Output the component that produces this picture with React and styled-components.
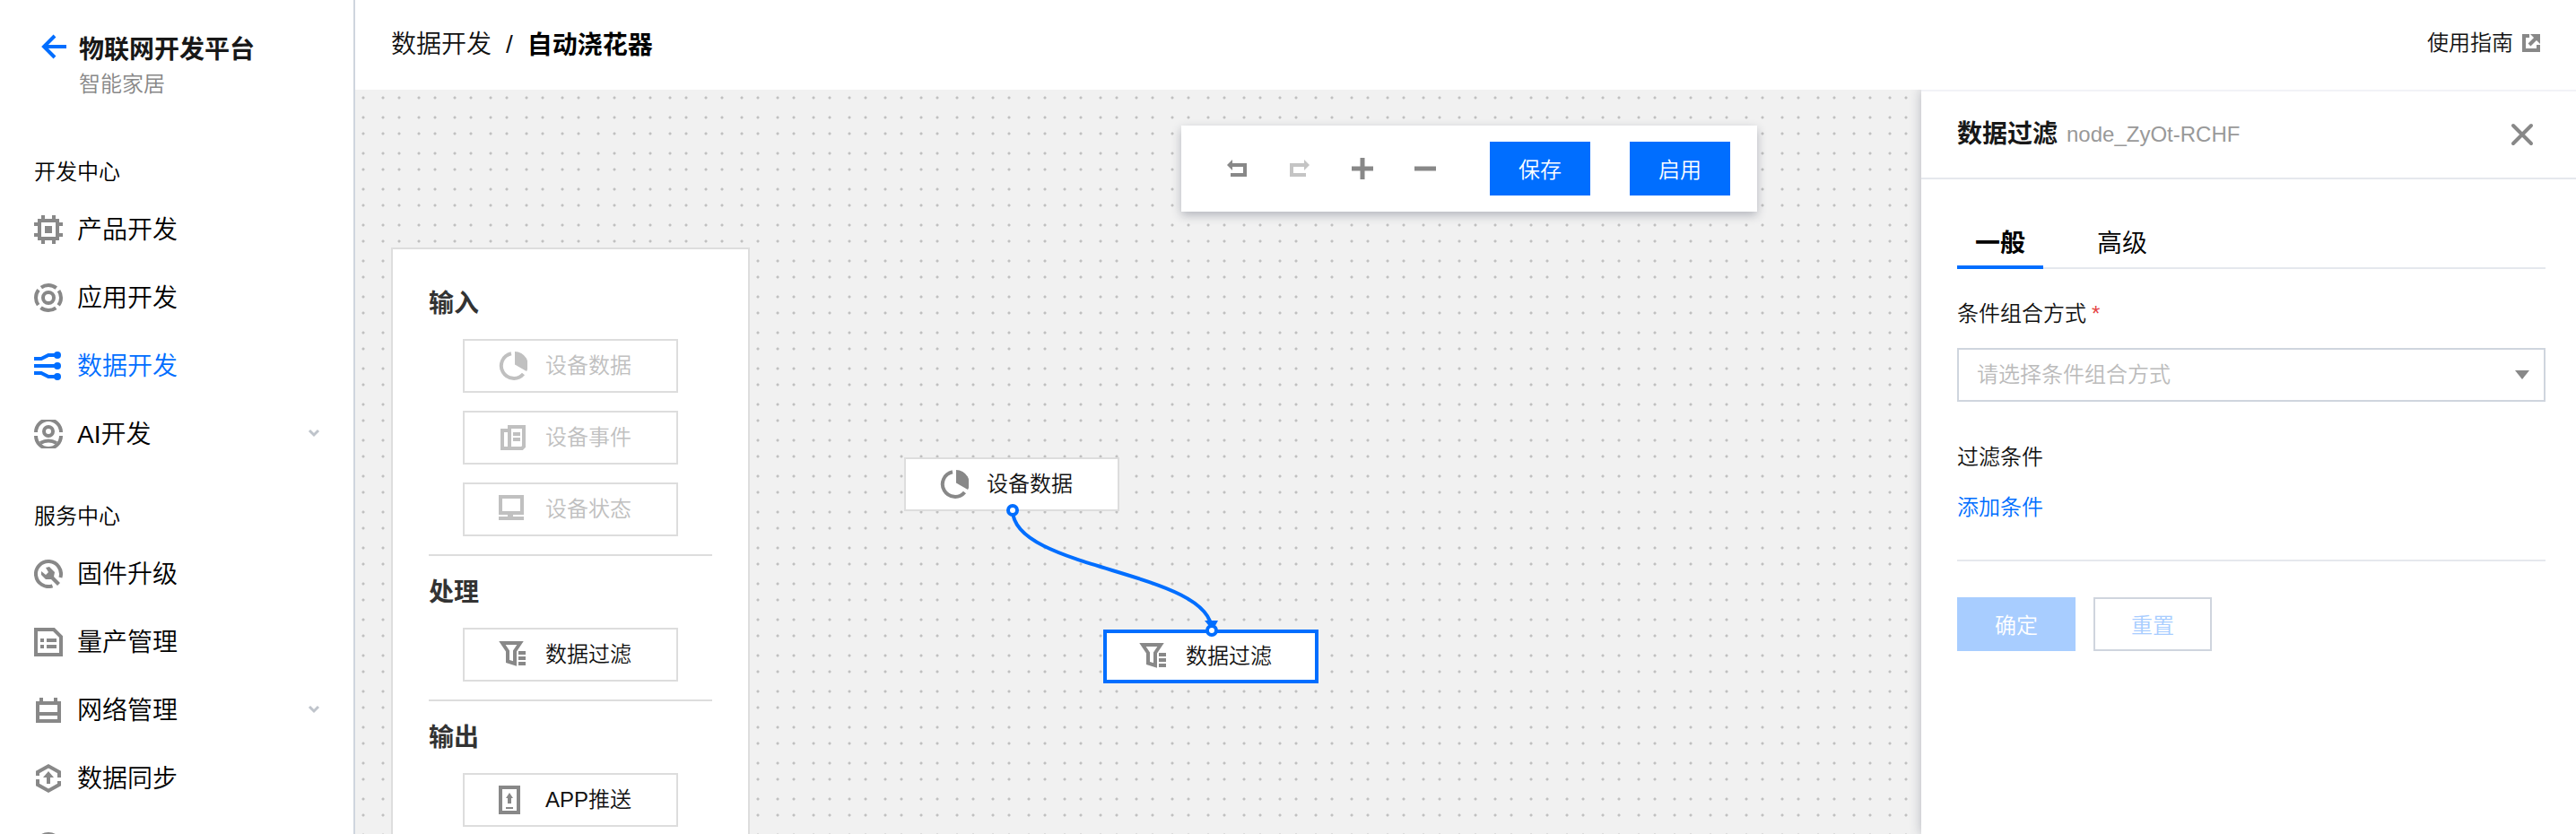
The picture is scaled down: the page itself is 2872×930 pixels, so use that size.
import React, { useState } from 'react';
import styled, { createGlobalStyle, css } from 'styled-components';

const blue = '#006eff';
const line = '#cfd5de';
const softLine = '#e5e8ed';
const gray = '#888';

const GlobalStyle = createGlobalStyle`
  * { box-sizing: border-box; }
  body {
    margin: 0;
    background: #fff;
    color: #000;
    font: 350 24px/32px 'Liberation Sans', 'Noto Sans CJK SC', sans-serif;
  }
  button, select, input { font: inherit; color: inherit; border-radius: 0; }
  a { color: inherit; text-decoration: none; }
  h1, h2, h3, p { margin: 0; }
  svg { display: block; flex: none; }
`;

const Page = styled.div`
  display: flex;
  height: 100vh;
  overflow: hidden;
`;

const Sidebar = styled.nav`
  flex: none;
  width: 396px;
  border-right: 2px solid ${line};
  background: #fff;
  overflow: hidden;
`;

const Brand = styled.div`
  display: flex;
  gap: 8px;
  height: 138px;
  padding: 36px 40px 0;
`;

const BackLink = styled.a`
  width: 40px;
  height: 32px;
`;

const BrandName = styled.h1`
  font-size: 28px;
  line-height: 40px;
  font-weight: 700;
  color: #181818;
`;

const BrandSub = styled.p`
  padding-top: 2px;
  line-height: 32px;
  color: ${gray};
`;

const GroupTitle = styled.h2`
  padding: 38px 38px 10px;
  font-size: 24px;
  line-height: 32px;
  font-weight: 350;
`;

const NavItem = styled.a`
  display: flex;
  align-items: center;
  gap: 16px;
  height: 76px;
  padding: 0 36px 0 38px;
  font-size: 28px;
  color: ${(p) => (p.$active ? blue : '#000')};
  > svg:first-child { color: ${(p) => (p.$active ? blue : gray)}; }
`;

const NavLabel = styled.span`
  flex: 1;
  padding-top: 2px;
`;

const Main = styled.div`
  flex: 1;
  min-width: 0;
  display: flex;
  flex-direction: column;
`;

const TopBar = styled.header`
  flex: none;
  display: flex;
  align-items: center;
  justify-content: space-between;
  height: 100px;
  padding: 0 40px;
`;

const Crumbs = styled.div`
  display: flex;
  align-items: center;
  gap: 16px;
  font-size: 28px;
  line-height: 36px;
  color: #111;
`;

const CrumbHere = styled.strong`
  padding-top: 2px;
  font-weight: 700;
  color: #000;
`;

const GuideLink = styled.a`
  display: flex;
  align-items: center;
  gap: 10px;
  padding-bottom: 4px;
  color: #111;
  > svg { color: ${gray}; }
`;

const dot = (x, y) =>
  `radial-gradient(circle at ${x}px ${y}px, #c0c0c0 1px, rgba(192, 192, 192, 0) 2px)`;

const Workspace = styled.main`
  position: relative;
  flex: 1;
  min-height: 0;
  overflow: hidden;
  background-color: #f1f1f1;
  background-image: ${dot(9, 9)}, ${dot(31, 9)}, ${dot(9, 31)}, ${dot(31, 31)};
  background-size: 40px 40px;
`;

const ToolbarRow = styled.div`
  display: flex;
  justify-content: center;
  padding: 40px 0 0 8px;
`;

const Toolbar = styled.div`
  display: flex;
  align-items: center;
  height: 96px;
  padding: 0 30px 0 46px;
  gap: 44px;
  background: #fff;
  box-shadow: 0 4px 10px rgba(54, 58, 80, 0.32);
`;

const ToolGroup = styled.div`
  display: flex;
  gap: 38px;
  padding-right: 12px;
`;

const ToolButton = styled.button`
  width: 32px;
  height: 32px;
  padding: 0;
  border: 0;
  background: none;
  color: ${gray};
  &:disabled { color: #c4c4c4; }
`;

const Button = styled.button`
  width: ${(p) => (p.$wide ? 132 : 112)}px;
  height: 60px;
  padding: 4px 0 0;
  border: 2px solid ${blue};
  background: ${blue};
  color: #fff;
  ${(p) => p.$faded && css`
    border-color: #a8cdff;
    background: #a8cdff;
  `}
  ${(p) => p.$outline && css`
    border-color: ${line};
    background: #fff;
    color: #a8cdff;
  `}
`;

const Palette = styled.section`
  width: 400px;
  margin: 40px 0 0 40px;
  padding: 40px 40px 0;
  border: 2px solid #ddd;
  background: #fff;
`;

const PaletteGroup = styled.div`
  display: flex;
  flex-direction: column;
  align-items: center;
  gap: 20px;
  padding-bottom: 20px;
  & + & {
    padding-top: 20px;
    border-top: 2px solid #ddd;
  }
`;

const PaletteTitle = styled.h3`
  align-self: stretch;
  padding-top: 2px;
  font-size: 28px;
  line-height: 38px;
  font-weight: 700;
  color: #333;
`;

const NodeBox = styled.button`
  display: flex;
  align-items: center;
  gap: 20px;
  width: 240px;
  height: 60px;
  padding: 0 0 0 38px;
  border: 2px solid #ddd;
  background: #fff;
  color: #111;
  > svg { color: ${gray}; }
  &:disabled, &:disabled > svg { color: #c0c0c0; }
`;

const CanvasNode = styled(NodeBox)`
  position: absolute;
  left: ${(p) => p.$x}px;
  top: ${(p) => p.$y}px;
  ${(p) => p.$selected && css`
    padding-left: 36px;
    border: 4px solid ${blue};
  `}
`;

const Wires = styled.svg`
  position: absolute;
  left: 0;
  top: 0;
  width: 100%;
  height: 100%;
  pointer-events: none;
`;

const Drawer = styled.aside`
  position: absolute;
  top: 0;
  right: 0;
  bottom: 0;
  width: 730px;
  border-top: 2px solid #f2f3f7;
  background: #fff;
  box-shadow: 0 0 12px rgba(54, 58, 80, 0.32);
`;

const DrawerHead = styled.div`
  display: flex;
  align-items: center;
  gap: 10px;
  height: 98px;
  padding: 0 44px 0 40px;
  border-bottom: 2px solid ${softLine};
`;

const DrawerTitle = styled.h2`
  font-size: 28px;
  line-height: 36px;
  font-weight: 700;
  color: #181818;
`;

const NodeId = styled.span`
  flex: 1;
  color: #999;
`;

const CloseButton = styled.button`
  width: 32px;
  height: 32px;
  padding: 0;
  border: 0;
  background: none;
  color: ${gray};
`;

const DrawerBody = styled.div`
  display: flex;
  flex-direction: column;
  align-items: stretch;
  padding: 40px 34px 0 40px;
`;

const Tabs = styled.div`
  display: flex;
  gap: 40px;
  height: 60px;
  border-bottom: 2px solid ${softLine};
`;

const Tab = styled.button`
  height: 60px;
  padding: 8px 20px 0;
  border: 0;
  border-bottom: 4px solid ${(p) => (p.$on ? blue : 'transparent')};
  background: none;
  font-size: 28px;
  font-weight: ${(p) => (p.$on ? 700 : 350)};
  color: #000;
`;

const FieldLabel = styled.label`
  display: flex;
  gap: 6px;
  padding: 34px 0 22px;
  color: #111;
`;

const Required = styled.span`
  color: #e54545;
`;

const SelectWrap = styled.div`
  position: relative;
  display: flex;
  align-items: center;
`;

const Select = styled.select`
  flex: 1;
  height: 60px;
  padding: 0 60px 0 20px;
  border: 2px solid ${line};
  background: #fff;
  color: #bbb;
  appearance: none;
`;

const SelectArrow = styled.svg`
  position: absolute;
  right: 18px;
  fill: ${gray};
  pointer-events: none;
`;

const Conditions = styled.div`
  display: flex;
  flex-direction: column;
  align-items: flex-start;
  gap: 24px;
  padding: 46px 0 42px;
  border-bottom: 2px solid ${softLine};
  color: #111;
`;

const AddLink = styled.a`
  color: ${blue};
`;

const Actions = styled.div`
  display: flex;
  gap: 20px;
  padding-top: 40px;
`;

const Icon = ({ size = 32, children }) => (
  <svg width={size} height={size} viewBox={`0 0 ${size} ${size}`} fill="none" stroke="currentColor" strokeWidth="4" aria-hidden="true">
    {children}
  </svg>
);

const icons = {
  chip: (
    <g>
      <path d="M6 6H26V26H6Z" />
      <path d="M10 0V5M22 0V5M10 27V32M22 27V32M0 10H5M0 22H5M27 10H32M27 22H32" />
      <path d="M12 12H20V20H12Z" fill="currentColor" stroke="none" />
    </g>
  ),
  app: (
    <g>
      <circle cx="16" cy="16" r="6" />
      <circle cx="16" cy="16" r="14" strokeDasharray="18 3.99" strokeDashoffset="9" />
    </g>
  ),
  flow: (
    <g>
      <path d="M0 8H8L16 4H26M0 16H26M0 24H8L16 28H26" />
      <g fill="currentColor" stroke="none"><circle cx="26" cy="4" r="4" /><circle cx="26" cy="16" r="4" /><circle cx="26" cy="28" r="4" /></g>
    </g>
  ),
  ai: (
    <g>
      <circle cx="16" cy="13" r="5" />
      <path d="M2 14A14 14 0 0 1 30 14M2 18A14 14 0 0 0 30 18" />
      <path d="M7 26Q16 21 25 26" />
    </g>
  ),
  wrench: (
    <g>
      <path d="M20.5 29.3A14 14 0 1 1 29.4 20" />
      <path d="M13 9L17 8L23 14L22 19L29 26L26 29L19 22L13 22L8 17V13L13 17L16 14Z" fill="currentColor" stroke="none" />
    </g>
  ),
  list: (
    <g>
      <path d="M2 2H22L30 10V30H2Z" />
      <path d="M7 14H11M14 14H25M7 21H11M14 21H25" />
    </g>
  ),
  network: (
    <path d="M4 8H28V28H4ZM4 20H28M8 2V8M24 2V8" />
  ),
  sync: (
    <g>
      <path d="M4 13V9L16 2.3L28 9V15M28 19V23L16 29.7L4 23V17" />
      <path d="M16 8L22 15H18V22H14V15H10Z" fill="currentColor" stroke="none" />
    </g>
  ),
  ring: <circle cx="16" cy="16" r="14" />,
  pie: (
    <g>
      <path d="M14 2.2A14 14 0 1 0 27.5 25" />
      <path d="M18 0A15 15 0 0 1 31 22L18 14.5Z" fill="currentColor" stroke="none" />
    </g>
  ),
  event: (
    <g>
      <path d="M12 4H28V26L26 28H12ZM12 8H4V28H12" />
      <path d="M16 12H24M16 18H24" />
    </g>
  ),
  monitor: (
    <g>
      <path d="M2 2H26V20H2ZM0 26H28" />
      <path d="M13 21V26" strokeWidth="6" />
    </g>
  ),
  filter: (
    <g>
      <path d="M4 3H24L18 12V26L10 23.5V12Z" />
      <path d="M22 14H30M22 20H30M22 26H30" />
    </g>
  ),
  push: (
    <g>
      <path d="M2 2H22V30H2Z" />
      <path d="M12 8L16 14H14V20H10V14H8Z" fill="currentColor" stroke="none" />
      <path d="M8 25H16" strokeWidth="2" />
    </g>
  ),
  undo: (
    <g>
      <path d="M10 12H25V23H9" />
      <path d="M11 6V18L5 12Z" fill="currentColor" stroke="none" />
    </g>
  ),
  redo: (
    <g>
      <path d="M22 12H7V23H23" />
      <path d="M21 6V18L27 12Z" fill="currentColor" stroke="none" />
    </g>
  ),
  plus: <path d="M16 4V28M4 16H28" strokeWidth="5" />,
  minus: <path d="M4 16H28" strokeWidth="5" />,
  close: <path d="M6 6L26 26M26 6L6 26" strokeLinecap="round" />,
};

const Chevron = () => (
  <svg width="16" height="12" viewBox="0 0 16 12" fill="none" stroke="#bfc4cb" strokeWidth="3" aria-hidden="true">
    <path d="M3 2L8 7L13 2" />
  </svg>
);

const groups = [
  {
    title: '开发中心',
    items: [
      { icon: 'chip', label: '产品开发' },
      { icon: 'app', label: '应用开发' },
      { icon: 'flow', label: '数据开发', active: true },
      { icon: 'ai', label: 'AI开发', more: true },
    ],
  },
  {
    title: '服务中心',
    items: [
      { icon: 'wrench', label: '固件升级' },
      { icon: 'list', label: '量产管理' },
      { icon: 'network', label: '网络管理', more: true },
      { icon: 'sync', label: '数据同步' },
      { icon: 'ring', label: '' },
    ],
  },
];

const palette = [
  {
    title: '输入',
    items: [
      { icon: 'pie', label: '设备数据', disabled: true },
      { icon: 'event', label: '设备事件', disabled: true },
      { icon: 'monitor', label: '设备状态', disabled: true },
    ],
  },
  { title: '处理', items: [{ icon: 'filter', label: '数据过滤' }] },
  { title: '输出', items: [{ icon: 'push', label: 'APP推送' }] },
];

export default function App() {
  const [tab, setTab] = useState('一般');
  return (
    <>
      <GlobalStyle />
      <Page>
        <Sidebar>
          <Brand>
            <BackLink href="#">
              <svg width="36" height="32" viewBox="0 0 36 32" fill="none" stroke={blue} strokeWidth="4" aria-hidden="true">
                <path d="M34 16H10M21 4L9 16L21 28" />
              </svg>
            </BackLink>
            <div>
              <BrandName>物联网开发平台</BrandName>
              <BrandSub>智能家居</BrandSub>
            </div>
          </Brand>
          {groups.map((g) => (
            <div key={g.title}>
              <GroupTitle>{g.title}</GroupTitle>
              {g.items.map((it) => (
                <NavItem key={it.icon} href="#" $active={it.active}>
                  <Icon>{icons[it.icon]}</Icon>
                  <NavLabel>{it.label}</NavLabel>
                  {it.more && <Chevron />}
                </NavItem>
              ))}
            </div>
          ))}
        </Sidebar>
        <Main>
          <TopBar>
            <Crumbs>
              <a href="#">数据开发</a>
              <span>/</span>
              <CrumbHere>自动浇花器</CrumbHere>
            </Crumbs>
            <GuideLink href="#">
              使用指南
              <Icon size={20}>
                <path d="M8 2H2V18H18V12" />
                <path d="M8 12L15 5" />
                <path d="M9 0H20V11Z" fill="currentColor" stroke="none" />
              </Icon>
            </GuideLink>
          </TopBar>
          <Workspace>
            <ToolbarRow>
              <Toolbar>
                <ToolGroup>
                  <ToolButton><Icon>{icons.undo}</Icon></ToolButton>
                  <ToolButton disabled><Icon>{icons.redo}</Icon></ToolButton>
                  <ToolButton><Icon>{icons.plus}</Icon></ToolButton>
                  <ToolButton><Icon>{icons.minus}</Icon></ToolButton>
                </ToolGroup>
                <Button>保存</Button>
                <Button>启用</Button>
              </Toolbar>
            </ToolbarRow>
            <Palette>
              {palette.map((g) => (
                <PaletteGroup key={g.title}>
                  <PaletteTitle>{g.title}</PaletteTitle>
                  {g.items.map((it) => (
                    <NodeBox key={it.label} disabled={it.disabled}>
                      <Icon>{icons[it.icon]}</Icon>
                      {it.label}
                    </NodeBox>
                  ))}
                </PaletteGroup>
              ))}
            </Palette>
            <CanvasNode $x={612} $y={410}><Icon>{icons.pie}</Icon>设备数据</CanvasNode>
            <CanvasNode $x={834} $y={602} $selected><Icon>{icons.filter}</Icon>数据过滤</CanvasNode>
            <Wires fill="none" stroke={blue} strokeWidth="4" aria-hidden="true">
              <path d="M733 469C733 536 955 536 955 603" />
              <path d="M947 592H962L956 603Z" fill={blue} stroke="none" />
              <circle cx="733" cy="469" r="5" fill="#fff" />
              <circle cx="955" cy="603" r="5" fill="#fff" />
            </Wires>
            <Drawer>
              <DrawerHead>
                <DrawerTitle>数据过滤</DrawerTitle>
                <NodeId>node_ZyOt-RCHF</NodeId>
                <CloseButton aria-label="关闭"><Icon>{icons.close}</Icon></CloseButton>
              </DrawerHead>
              <DrawerBody>
                <Tabs role="tablist">
                  {['一般', '高级'].map((t) => (
                    <Tab key={t} role="tab" aria-selected={tab === t} $on={tab === t} onClick={() => setTab(t)}>{t}</Tab>
                  ))}
                </Tabs>
                <FieldLabel htmlFor="combine">条件组合方式<Required>*</Required></FieldLabel>
                <SelectWrap>
                  <Select id="combine"><option>请选择条件组合方式</option></Select>
                  <SelectArrow width="16" height="10" viewBox="0 0 16 10" aria-hidden="true"><path d="M0 0H16L8 10Z" /></SelectArrow>
                </SelectWrap>
                <Conditions>
                  <span>过滤条件</span>
                  <AddLink href="#">添加条件</AddLink>
                </Conditions>
                <Actions>
                  <Button $wide $faded disabled>确定</Button>
                  <Button $wide $outline disabled>重置</Button>
                </Actions>
              </DrawerBody>
            </Drawer>
          </Workspace>
        </Main>
      </Page>
    </>
  );
}
